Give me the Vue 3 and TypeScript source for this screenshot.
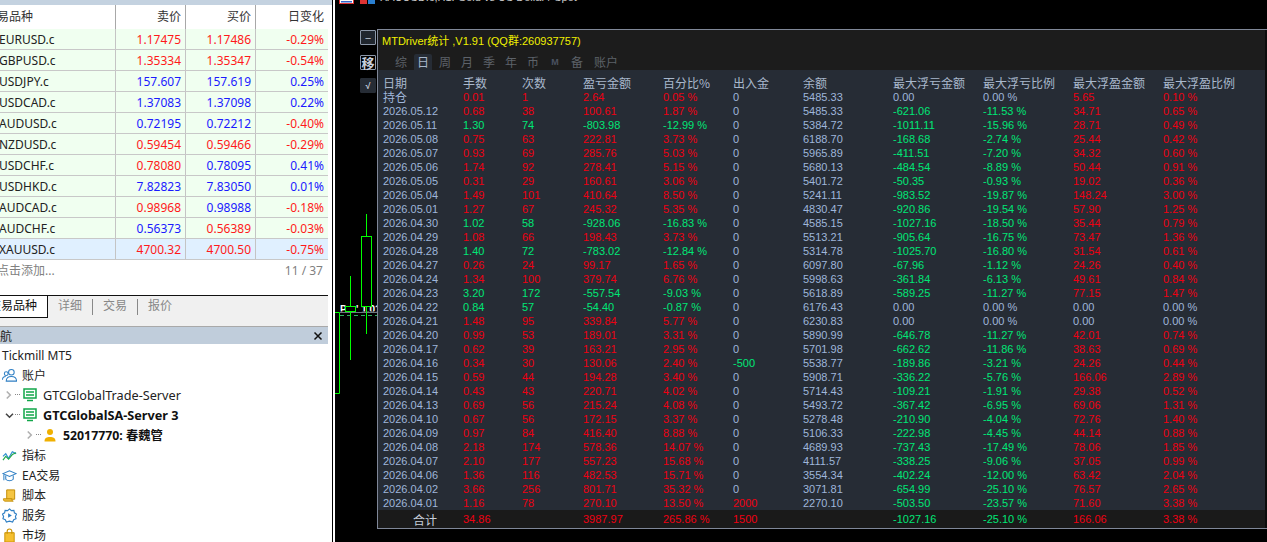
<script setup lang="ts">
interface Quote {
  name: string
  bid: string
  ask: string
  change: string
  bidUp: boolean
  askUp: boolean
  changeUp: boolean
  selected?: boolean
}

const quotes: Quote[] = [
  { name: 'EURUSD.c', bid: '1.17475', ask: '1.17486', change: '-0.29%', bidUp: false, askUp: false, changeUp: false },
  { name: 'GBPUSD.c', bid: '1.35334', ask: '1.35347', change: '-0.54%', bidUp: false, askUp: false, changeUp: false },
  { name: 'USDJPY.c', bid: '157.607', ask: '157.619', change: '0.25%', bidUp: true, askUp: true, changeUp: true },
  { name: 'USDCAD.c', bid: '1.37083', ask: '1.37098', change: '0.22%', bidUp: true, askUp: true, changeUp: true },
  { name: 'AUDUSD.c', bid: '0.72195', ask: '0.72212', change: '-0.40%', bidUp: true, askUp: true, changeUp: false },
  { name: 'NZDUSD.c', bid: '0.59454', ask: '0.59466', change: '-0.29%', bidUp: false, askUp: false, changeUp: false },
  { name: 'USDCHF.c', bid: '0.78080', ask: '0.78095', change: '0.41%', bidUp: false, askUp: true, changeUp: true },
  { name: 'USDHKD.c', bid: '7.82823', ask: '7.83050', change: '0.01%', bidUp: true, askUp: true, changeUp: true },
  { name: 'AUDCAD.c', bid: '0.98968', ask: '0.98988', change: '-0.18%', bidUp: false, askUp: true, changeUp: false },
  { name: 'AUDCHF.c', bid: '0.56373', ask: '0.56389', change: '-0.03%', bidUp: true, askUp: false, changeUp: false },
  { name: 'XAUUSD.c', bid: '4700.32', ask: '4700.50', change: '-0.75%', bidUp: false, askUp: false, changeUp: false, selected: true }
]

const statTabs = ['综', '日', '周', '月', '季', '年', '币', 'M', '备', '账户']
const columns = ['日期', '手数', '次数', '盈亏金额', '百分比%', '出入金', '余额', '最大浮亏金额', '最大浮亏比例', '最大浮盈金额', '最大浮盈比例']

// date lots count profit pct cash balance maxLoss lossPct maxGain gainPct
const raw = `持仓 0.01 1 2.64 0.05 0 5485.33 0.00 0.00 5.65 0.10
2026.05.12 0.68 38 100.61 1.87 0 5485.33 -621.06 -11.53 34.71 0.65
2026.05.11 1.30 74 -803.98 -12.99 0 5384.72 -1011.11 -15.96 28.71 0.49
2026.05.08 0.75 63 222.81 3.73 0 6188.70 -168.68 -2.74 25.44 0.42
2026.05.07 0.93 69 285.76 5.03 0 5965.89 -411.51 -7.20 34.32 0.60
2026.05.06 1.74 92 278.41 5.15 0 5680.13 -484.54 -8.89 50.44 0.91
2026.05.05 0.31 29 160.61 3.06 0 5401.72 -50.35 -0.93 19.02 0.36
2026.05.04 1.49 101 410.64 8.50 0 5241.11 -983.52 -19.87 148.24 3.00
2026.05.01 1.27 67 245.32 5.35 0 4830.47 -920.86 -19.54 57.90 1.25
2026.04.30 1.02 58 -928.06 -16.83 0 4585.15 -1027.16 -18.50 35.44 0.79
2026.04.29 1.08 66 198.43 3.73 0 5513.21 -905.64 -16.75 73.47 1.36
2026.04.28 1.40 72 -783.02 -12.84 0 5314.78 -1025.70 -16.80 31.54 0.61
2026.04.27 0.26 24 99.17 1.65 0 6097.80 -67.96 -1.12 24.26 0.40
2026.04.24 1.34 100 379.74 6.76 0 5998.63 -361.84 -6.13 49.61 0.84
2026.04.23 3.20 172 -557.54 -9.03 0 5618.89 -589.25 -11.27 77.15 1.47
2026.04.22 0.84 57 -54.40 -0.87 0 6176.43 0.00 0.00 0.00 0.00
2026.04.21 1.48 95 339.84 5.77 0 6230.83 0.00 0.00 0.00 0.00
2026.04.20 0.99 53 189.01 3.31 0 5890.99 -646.78 -11.27 42.01 0.74
2026.04.17 0.62 39 163.21 2.95 0 5701.98 -662.62 -11.86 38.63 0.69
2026.04.16 0.34 30 130.06 2.40 -500 5538.77 -189.86 -3.21 24.26 0.44
2026.04.15 0.59 44 194.28 3.40 0 5908.71 -336.22 -5.76 166.06 2.89
2026.04.14 0.43 43 220.71 4.02 0 5714.43 -109.21 -1.91 29.38 0.52
2026.04.13 0.69 56 215.24 4.08 0 5493.72 -367.42 -6.95 69.06 1.31
2026.04.10 0.67 56 172.15 3.37 0 5278.48 -210.90 -4.04 72.76 1.40
2026.04.09 0.97 84 416.40 8.88 0 5106.33 -222.98 -4.45 44.14 0.88
2026.04.08 2.18 174 578.36 14.07 0 4689.93 -737.43 -17.49 78.06 1.85
2026.04.07 2.10 177 557.23 15.68 0 4111.57 -338.25 -9.06 37.05 0.99
2026.04.06 1.36 116 482.53 15.71 0 3554.34 -402.24 -12.00 63.42 2.04
2026.04.02 3.66 256 801.71 35.32 0 3071.81 -654.99 -25.10 76.57 2.65
2026.04.01 1.16 78 270.10 13.50 2000 2270.10 -503.50 -23.57 71.60 3.38`

const tone = (v: string) => {
  const n = parseFloat(v)
  if (n === 0) return 'plain'
  return n < 0 ? 'down' : 'up'
}

const rows = raw.split('\n').map((line) => {
  const c = line.split(' ')
  const side = tone(c[3])
  return [
    { text: c[0], cls: 'plain' },
    { text: c[1], cls: side },
    { text: c[2], cls: side },
    { text: c[3], cls: side },
    { text: c[4] + ' %', cls: side },
    { text: c[5], cls: tone(c[5]) },
    { text: c[6], cls: 'plain' },
    { text: c[7], cls: tone(c[7]) },
    { text: c[8] + ' %', cls: tone(c[8]) },
    { text: c[9], cls: tone(c[9]) },
    { text: c[10] + ' %', cls: tone(c[10]) }
  ]
})

const totals = [
  { text: '34.86', cls: 'up' },
  { text: '', cls: 'up' },
  { text: '3987.97', cls: 'up' },
  { text: '265.86 %', cls: 'up' },
  { text: '1500', cls: 'up' },
  { text: '', cls: 'plain' },
  { text: '-1027.16', cls: 'down' },
  { text: '-25.10 %', cls: 'down' },
  { text: '166.06', cls: 'up' },
  { text: '3.38 %', cls: 'up' }
]
</script>

<template>
  <div class="screen">
    <aside class="side">
      <div class="strip"></div>

      <div class="watch">
        <div class="watch-row watch-head">
          <div class="cell name head-name">交易品种</div>
          <div class="cell num">卖价</div>
          <div class="cell num">买价</div>
          <div class="cell num chg">日变化</div>
        </div>
        <div v-for="q in quotes" :key="q.name" class="watch-row quote" :class="{ selected: q.selected }">
          <div class="cell name">{{ q.name }}</div>
          <div class="cell num" :class="q.bidUp ? 'blue' : 'red'">{{ q.bid }}</div>
          <div class="cell num" :class="q.askUp ? 'blue' : 'red'">{{ q.ask }}</div>
          <div class="cell num chg" :class="q.changeUp ? 'blue' : 'red'">{{ q.change }}</div>
        </div>
        <div class="watch-foot">
          <span class="add">点击添加...</span>
          <span class="count">11 / 37</span>
        </div>
      </div>

      <div class="tabs">
        <div class="tab-active">交易品种</div>
        <div class="tab">详细</div>
        <i class="tab-sep"></i>
        <div class="tab">交易</div>
        <i class="tab-sep"></i>
        <div class="tab">报价</div>
      </div>

      <div class="nav-head">
        <span class="nav-title">导航</span>
        <svg width="10" height="10" viewBox="0 0 10 10"><path d="M1.5 1.5l7 7M8.5 1.5l-7 7" stroke="#111" stroke-width="1.5" /></svg>
      </div>

      <div class="tree">
        <div class="node root">Tickmill MT5</div>

        <div class="node">
          <svg class="ico" viewBox="0 0 16 16" fill="none" stroke="#2f7fc4" stroke-width="1.1">
            <circle cx="10" cy="4.5" r="3" />
            <path d="M4.5 14c0-3.5 2-5 5.5-5s5.5 1.5 5.5 5z" />
            <circle cx="4.5" cy="6" r="2" />
            <path d="M.5 12.5c0-2.5 1.3-3.500 3.500-3.500" />
          </svg>
          <span>账户</span>
        </div>

        <div class="node lvl1">
          <svg class="chev" viewBox="0 0 8 10" fill="none" stroke="#b0b0b0" stroke-width="1.8"><path d="M2 1l4 4-4 4" /></svg>
          <i class="dots"></i>
          <svg class="ico srv" viewBox="0 0 14 14" fill="none" stroke="#12a64a" stroke-width="1.5">
            <rect x="1" y="1" width="12" height="9" />
            <path d="M3 4h8M3 7h8M4 12.5h6" />
          </svg>
          <span class="srv-text">GTCGlobalTrade-Server</span>
        </div>

        <div class="node lvl1">
          <svg class="chev open" viewBox="0 0 10 8" fill="none" stroke="#444" stroke-width="1.8"><path d="M1 2l4 4 4-4" /></svg>
          <i class="dots"></i>
          <svg class="ico srv" viewBox="0 0 14 14" fill="none" stroke="#12a64a" stroke-width="1.5">
            <rect x="1" y="1" width="12" height="9" />
            <path d="M3 4h8M3 7h8M4 12.5h6" />
          </svg>
          <b class="srv-text">GTCGlobalSA-Server 3</b>
        </div>

        <div class="node lvl2">
          <svg class="chev" viewBox="0 0 8 10" fill="none" stroke="#b0b0b0" stroke-width="1.8"><path d="M2 1l4 4-4 4" /></svg>
          <i class="dots"></i>
          <svg class="ico usr" viewBox="0 0 12 14" fill="#f0b000">
            <circle cx="6" cy="4" r="3" />
            <path d="M.5 13.5c0-3.500 2-4.500 5.500-4.500s5.500 1 5.500 4.500z" />
          </svg>
          <b class="acc-text">52017770: 春魏管</b>
        </div>

        <div class="node">
          <svg class="ico" viewBox="0 0 16 16" fill="none" stroke-width="1.2">
            <path d="M1 9l3-3 3 5 4-7 4 2" stroke="#2f8fd0" />
            <path d="M1 13l3-4 3 3 4-5 4-2" stroke="#22a84a" />
          </svg>
          <span>指标</span>
        </div>

        <div class="node">
          <svg class="ico" viewBox="0 0 16 16" fill="none" stroke="#2f7fc4" stroke-width="1.1">
            <path d="M1 6l7-3 7 3-7 3z" />
            <path d="M4 8v4c2 2 6 2 8 0V8" />
            <path d="M2 7v6" />
          </svg>
          <span>EA交易</span>
        </div>

        <div class="node">
          <svg class="ico" viewBox="0 0 16 16" fill="#f5c542" stroke="#c08a00" stroke-width="1">
            <path d="M5 2h8.500v10H5z" />
            <path d="M1.500 11.500h9c0 1.500.5 2.500 1.500 2.500H3c-1 0-1.500-1-1.500-2.500z" />
          </svg>
          <span>脚本</span>
        </div>

        <div class="node">
          <svg class="ico" viewBox="0 0 16 16" fill="none" stroke="#2f7fc4" stroke-width="1.2">
            <path d="M8 1l2 1.800 2.700-.3.500 2.600 2.300 1.400L14.300 9l.7 2.500-2.500 1-1.200 2.400L8 14l-3.300.9-1.200-2.400-2.500-1L1.700 9 .5 6.500l2.300-1.400.5-2.600L6 2.800z" />
            <path d="M6.500 5.500l4 2.500-4 2.500z" fill="#2f7fc4" stroke="none" />
          </svg>
          <span>服务</span>
        </div>

        <div class="node">
          <svg class="ico" viewBox="0 0 16 16">
            <path d="M3 5h10v10H3z" fill="#f5c030" stroke="#c89000" />
            <path d="M5.500 6V3.500a2.500 2.500 0 0 1 5 0V6" fill="none" stroke="#c89000" stroke-width="1.2" />
          </svg>
          <span>市场</span>
        </div>
      </div>
    </aside>

    <main class="chart">
      <div class="chart-title">
        <svg class="flags" width="40" height="6" viewBox="0 0 40 6">
          <rect x=".5" y="-6" width="14" height="9.5" fill="#fff" stroke="#d33" />
          <rect x="2" y="1" width="11" height="1.5" fill="#36c" />
          <rect x="21" y="-6" width="7" height="10" fill="#d33" />
          <rect x="29" y="-6" width="7" height="10" fill="#2a7fd0" />
        </svg>
        <span class="chart-symbol">XAUUSD.c,H1: Gold vs US Dollar / Spot</span>
      </div>

      <svg class="candles" width="42" height="200" viewBox="335 205 42 200">
        <defs>
          <clipPath id="labelClip"><rect x="340" y="305" width="37" height="6.5" /></clipPath>
        </defs>
        <g class="trade-label" clip-path="url(#labelClip)">
          <text x="340" y="313">P</text>
          <text x="356" y="313">' 1.01</text>
        </g>
        <path d="M340 312.5h37" stroke="#6b7480" />
        <path d="M340 315.5h37" stroke="#2eae5c" stroke-dasharray="4 3" />
        <path d="M335 312.5h4.500v81H335" fill="none" stroke="#00ff00" />
        <path d="M350.5 276v30M350.5 311v49" stroke="#00ff00" />
        <rect x="345.5" y="306.5" width="10" height="5" fill="#000" stroke="#00ff00" />
        <path d="M366.5 214v22M366.5 306v28" stroke="#00ff00" />
        <rect x="361.5" y="236.5" width="10" height="70" fill="#000" stroke="#00ff00" />
      </svg>

      <div class="tools">
        <button class="tool minus">−</button>
        <button class="tool move">移</button>
        <button class="tool check">√</button>
      </div>

      <section class="panel">
        <header class="panel-head">
          <div class="panel-title">MTDriver统计 ,V1.91 (QQ群:260937757)</div>
          <nav class="stat-tabs">
            <span v-for="t in statTabs" :key="t" class="stat-tab" :class="{ on: t === '日', tiny: t === 'M' }">{{ t }}</span>
          </nav>
        </header>

        <div class="stat-body">
          <div class="stat-row stat-head">
            <span v-for="c in columns" :key="c">{{ c }}</span>
          </div>
          <div v-for="(r, i) in rows" :key="i" class="stat-row">
            <span v-for="(c, j) in r" :key="j" :class="[c.cls, { cjk: i === 0 && j === 0 }]">{{ c.text }}</span>
          </div>
        </div>

        <footer class="stat-row stat-total">
          <span class="total-label">合计</span>
          <span v-for="(c, j) in totals" :key="j" :class="c.cls">{{ c.text }}</span>
        </footer>
      </section>
    </main>
  </div>
</template>

<style>
html, body {
  margin: 0;
  background: #000;
  overflow: hidden;
}
</style>

<style scoped>
.screen {
  width: 1267px;
  height: 542px;
  display: flex;
  overflow: hidden;
  font-family: "Noto Sans", "Noto Sans CJK SC", sans-serif;
  font-size: 12px;
}

.side {
  width: 332px;
  height: 542px;
  flex: none;
  background: #fff;
  overflow: hidden;
  color: #222;
}
.strip {
  height: 5px;
  background: #c4d2e0;
}

.watch {
  width: 328px;
  height: 290px;
}
.watch-row {
  display: grid;
  grid-template-columns: 116px 70px 70px 72px;
  height: 21px;
  line-height: 22px;
}
.watch-head {
  height: 24px;
  line-height: 24px;
  color: #333;
}
.cell {
  padding-right: 4px;
  border-right: 1px solid #c4c4c4;
  overflow: hidden;
  white-space: nowrap;
  box-sizing: border-box;
}
.watch-head .cell {
  border-right-color: #a8a8a8;
}
.chg {
  border-right: 0;
}
.num {
  text-align: right;
}
.name {
  text-indent: -1px;
}
.head-name {
  text-indent: -15px;
}
.quote {
  background: #f0fff0;
  border-bottom: 1px solid #c8c8c8;
  box-sizing: border-box;
}
.quote.selected {
  background: #e0f0ff;
}
.red {
  color: #ff1a1a;
}
.blue {
  color: #1a1aff;
}
.watch-foot {
  display: flex;
  justify-content: space-between;
  padding: 1px 5px 0 0;
  line-height: 20px;
  color: #808080;
}
.add {
  text-indent: -3px;
  overflow: hidden;
}

.tabs {
  display: flex;
  width: 328px;
  height: 31px;
  box-sizing: border-box;
  align-items: flex-start;
  background: #f0f0f0;
  border-top: 1px solid #111;
  color: #888;
}
.tab-active {
  width: 47px;
  height: 21px;
  background: #fff;
  color: #111;
  line-height: 20px;
  text-indent: -11px;
  overflow: hidden;
  white-space: nowrap;
  border-right: 1.5px solid #111;
  border-bottom: 1.5px solid #111;
}
.tab {
  padding: 0 10px;
  line-height: 20px;
}
.tab-sep {
  width: 1px;
  height: 16px;
  margin-top: 3px;
  background: #888;
}

.nav-head {
  width: 328px;
  height: 18px;
  box-sizing: border-box;
  background: #c0cddb;
  border-top: 1px solid #a9a9a9;
  display: flex;
  align-items: center;
  justify-content: space-between;
  padding-right: 5px;
}
.nav-title {
  margin-left: -12px;
  color: #222;
}

.tree {
  padding-top: 1px;
}
.node {
  height: 20px;
  display: flex;
  align-items: center;
  white-space: nowrap;
  color: #222;
  padding-left: 2px;
}
.ico {
  width: 15px;
  height: 15px;
  flex: none;
  margin-right: 5px;
}
.lvl1 {
  padding-left: 5px;
}
.lvl2 {
  padding-left: 26px;
}
.chev {
  width: 7px;
  height: 10px;
  flex: none;
  margin-right: 3px;
}
.chev.open {
  width: 9px;
  height: 7px;
  margin-right: 1px;
}
.dots {
  width: 5px;
  height: 1px;
  flex: none;
  margin-right: 3px;
  border-top: 1px dotted #888;
}
.srv {
  width: 14px;
  height: 14px;
  margin-right: 6px;
}
.usr {
  width: 12px;
  height: 14px;
  margin-right: 7px;
}
.srv-text {
  color: #222;
  font-size: 12.7px;
}
.node b {
  color: #111;
}
.acc-text {
  font-weight: 700;
  font-size: 12.3px;
}

.chart {
  position: relative;
  flex: 1;
  display: flex;
  flex-wrap: wrap;
  align-content: flex-start;
  height: 542px;
  background: #000;
  border-left: 1px solid #000;
  box-sizing: border-box;
  overflow: hidden;
}
.chart::before {
  content: "";
  position: absolute;
  left: 0;
  top: 0;
  bottom: 0;
  width: 2px;
  background: #fff;
}
.chart-title {
  width: 100%;
  height: 6px;
  overflow: hidden;
  display: flex;
  padding-left: 6px;
  margin-bottom: 23px;
}
.flags {
  flex: none;
}
.chart-symbol {
  margin: -10px 0 0 1px;
  font-family: "Liberation Sans", sans-serif;
  font-size: 11px;
  line-height: 14px;
  color: #c8c8c8;
}
.candles {
  position: absolute;
  left: 2px;
  top: 205px;
}
.trade-label text {
  font-family: "Liberation Sans", sans-serif;
  font-size: 10px;
  font-weight: 700;
  fill: #fff;
}

.tools {
  width: 17px;
  margin-left: 27px;
  display: flex;
  flex-direction: column;
  padding-top: 1px;
  position: relative;
}
.tool {
  width: 16px;
  height: 15px;
  padding: 0;
  box-sizing: border-box;
  border: 1px solid #8c97a8;
  border-radius: 1px;
  background: #20262e;
  color: #c8d0dc;
  font-family: "Noto Sans CJK SC", sans-serif;
  font-size: 11px;
  line-height: 12px;
}
.move {
  margin-top: 10px;
  background: #000;
  font-size: 13px;
  font-weight: 700;
}
.check {
  margin-top: 8px;
  background: #262c35;
  border-color: #262c35;
  font-family: "Liberation Sans", sans-serif;
  font-size: 9px;
  font-weight: 700;
}

.panel {
  width: 890px;
  height: 500px;
  flex: none;
  box-sizing: border-box;
  border: 1px solid #7f8798;
  border-right: 0;
  background: #0c0c0c;
  font-family: "Liberation Sans", "Noto Sans CJK SC", sans-serif;
  font-size: 11px;
}
.panel-head {
  height: 40px;
  margin-right: 2px;
  background: #1c1c1c;
}
.panel-title {
  padding: 4px 0 0 4px;
  height: 16px;
  line-height: 15px;
  font-size: 11px;
  color: #f0f000;
}
.stat-tabs {
  display: flex;
  height: 20px;
  padding-left: 12px;
}
.stat-tab {
  width: 22px;
  height: 20px;
  line-height: 24px;
  font-family: "Noto Sans CJK SC", sans-serif;
  font-size: 12px;
  text-align: center;
  color: #5d6269;
}
.stat-tab.on {
  width: 18px;
  height: 16px;
  margin: 4px 2px 0;
  line-height: 16px;
  background: #262c35;
  color: #a9b8cc;
  border-radius: 2px 2px 0 0;
}
.stat-tab.tiny {
  font-family: "Liberation Sans", sans-serif;
  font-size: 9px;
  font-weight: 700;
  color: #4a5260;
}
.stat-tab:last-child {
  width: 30px;
  margin-left: 3px;
}
.stat-body {
  height: 440px;
  margin-right: 2px;
  padding-top: 6px;
  box-sizing: border-box;
  background: #262c35;
}
.stat-row {
  display: grid;
  grid-template-columns: 80px 59px 61px 80px 70px 70px 90px 90px 90px 90px 1fr;
  height: 14px;
  padding-left: 5px;
  line-height: 14px;
  white-space: nowrap;
}
.stat-head {
  font-family: "Noto Sans CJK SC", "Liberation Sans", sans-serif;
  font-size: 12px;
  color: #a9b8cc;
}
.cjk {
  font-family: "Noto Sans CJK SC", sans-serif;
  font-size: 12px;
}
.plain {
  color: #9fb6da;
}
.up {
  color: #ee0012;
}
.down {
  color: #00e676;
}
.stat-total {
  height: 18px;
  margin-right: 2px;
  line-height: 19px;
  background: #1a1a1a;
}
.total-label {
  padding-left: 30px;
  font-family: "Noto Sans CJK SC", sans-serif;
  font-size: 12px;
  color: #c8d0dc;
}
</style>
